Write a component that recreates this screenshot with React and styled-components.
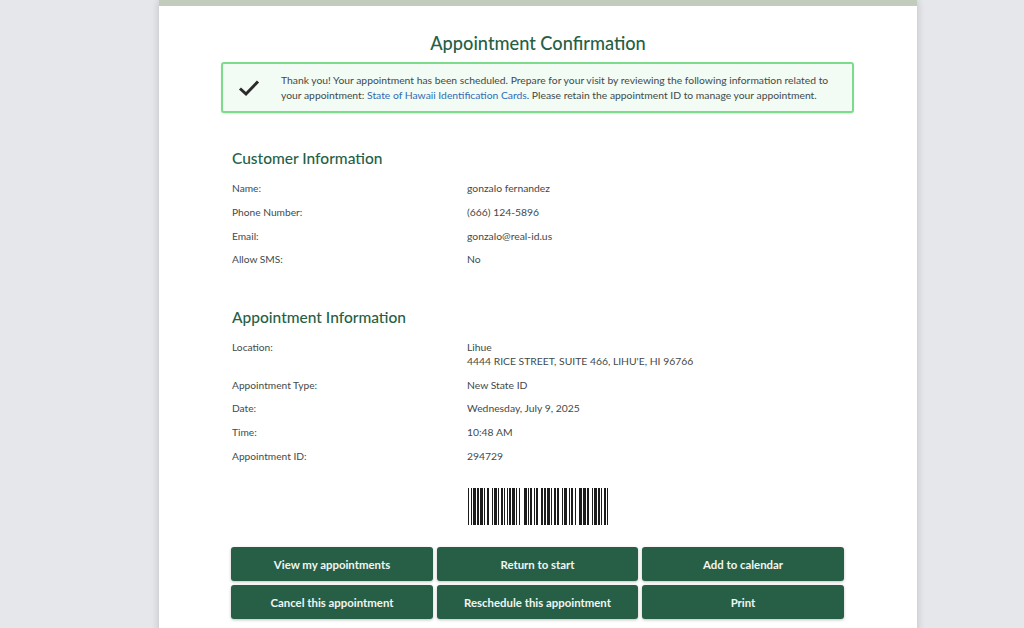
import styled, { createGlobalStyle } from "styled-components";

const Global = createGlobalStyle`
  html, body {
    margin: 0;
    height: 628px;
    overflow: hidden;
    background: #e5e7eb;
    font-family: Lato, "Noto Sans", sans-serif;
  }
`;

const customerRows = [
  ["Name:", "gonzalo fernandez"],
  ["Phone Number:", "(666) 124-5896"],
  ["Email:", "gonzalo@real-id.us"],
  ["Allow SMS:", "No"],
];

const appointmentRows = [
  ["Location:", "Lihue", "4444 RICE STREET, SUITE 466, LIHU'E, HI 96766"],
  ["Appointment Type:", "New State ID"],
  ["Date:", "Wednesday, July 9, 2025"],
  ["Time:", "10:48 AM"],
  ["Appointment ID:", "294729"],
];

const buttons = [
  "View my appointments",
  "Return to start",
  "Add to calendar",
  "Cancel this appointment",
  "Reschedule this appointment",
  "Print",
];

// bar, gap, bar, gap ... in px
const barcodeRuns = [
  1, 2, 1, 1, 3, 1, 2, 1, 3, 1, 1, 2, 2, 3,
  1, 1, 3, 1, 1, 2, 2, 1, 1, 2,
  1, 1, 2, 1, 3, 1, 1, 2, 1, 4,
  3, 1, 1, 1, 2, 2, 1, 1, 2, 3,
  2, 1, 2, 1, 3, 1, 1, 2, 2, 1, 2, 3,
  1, 1, 3, 2, 1, 1, 2, 2, 1, 3,
  3, 1, 3, 1, 2, 3,
  1, 1, 3, 1, 2, 1, 1, 2, 2, 1, 1,
];

function Barcode() {
  let x = 0;
  const bars = barcodeRuns.map((w, i) => {
    const rect = i % 2 === 0 ? <rect key={i} x={x} y="0" width={w} height="37" fill="#1c1c1c" /> : null;
    x += w;
    return rect;
  });
  return (
    <svg width="140" height="37" viewBox="0 0 140 37">
      {bars}
    </svg>
  );
}

function InfoRow({ label, lines }) {
  return (
    <Row>
      <Label>{label}</Label>
      <div>
        {lines.map((line) => (
          <div key={line}>{line}</div>
        ))}
      </div>
    </Row>
  );
}

export default function App() {
  return (
    <>
      <Global />
      <Page>
        <Card>
          <Title>Appointment Confirmation</Title>
          <Alert>
            <CheckWrap>
              <svg width="22" height="18" viewBox="0 0 22 18">
                <path d="M2 9.5 L8 15 L20 2.5" fill="none" stroke="#2b2b2b" strokeWidth="3" />
              </svg>
            </CheckWrap>
            <AlertText>
              Thank you! Your appointment has been scheduled. Prepare for your visit by reviewing the
              following information related to your appointment:{" "}
              <AlertLink>State of Hawaii Identification Cards</AlertLink>. Please retain the appointment
              ID to manage your appointment.
            </AlertText>
          </Alert>

          <Section>
            <Heading>Customer Information</Heading>
            {customerRows.map(([label, ...lines]) => (
              <InfoRow key={label} label={label} lines={lines} />
            ))}
          </Section>

          <Section $second>
            <Heading>Appointment Information</Heading>
            {appointmentRows.map(([label, ...lines]) => (
              <InfoRow key={label} label={label} lines={lines} />
            ))}
          </Section>

          <BarcodeWrap>
            <Barcode />
          </BarcodeWrap>

          <Buttons>
            {buttons.map((b) => (
              <ActionButton key={b}>{b}</ActionButton>
            ))}
          </Buttons>
        </Card>
      </Page>
    </>
  );
}

const Page = styled.div`
  display: flex;
  height: 628px;
  overflow: hidden;
`;

const Card = styled.main`
  margin-left: 159px;
  width: 758px;
  height: 700px;
  box-sizing: border-box;
  background: #fff;
  border-top: 6px solid #c1ccbc;
  box-shadow: 0 0 8px rgba(0, 0, 0, 0.18);
  padding: 0 62px;
  color: #3f4a4a;
`;

const Title = styled.h1`
  margin: 24px 0 0;
  height: 26px;
  line-height: 26px;
  text-align: center;
  font-size: 18.2px;
  font-weight: 500;
  color: #265f45;
`;

const Alert = styled.div`
  display: flex;
  align-items: center;
  width: 633px;
  height: 51px;
  box-sizing: border-box;
  margin-top: 6px;
  border: 2px solid #7ddc8c;
  border-radius: 3px;
  background: #f3fbf5;
  box-shadow: 0 1px 2px rgba(0, 0, 0, 0.1);
`;

const CheckWrap = styled.div`
  flex: 0 0 58px;
  display: flex;
  justify-content: center;
  padding-right: 7px;
  box-sizing: border-box;
`;

const AlertText = styled.div`
  font-size: 10.33px;
  line-height: 14.5px;
  color: #3f4a4a;
  padding-right: 20px;
`;

const AlertLink = styled.span`
  color: #2f6cb5;
`;

const Section = styled.section`
  margin-top: ${(p) => (p.$second ? "32.8px" : "33px")};
  padding-left: 11px;
`;

const Heading = styled.h2`
  margin: 0 0 7px;
  height: 24px;
  line-height: 24px;
  font-size: 15.5px;
  font-weight: 500;
  color: #265f45;
`;

const Row = styled.div`
  display: grid;
  grid-template-columns: 235px 1fr;
  padding: 5px 0;
  font-size: 10.35px;
  line-height: 13.8px;
`;

const Label = styled.div`
  font-size: 10.2px;
`;

const BarcodeWrap = styled.div`
  display: flex;
  margin-top: 19.4px;
  padding-left: 247px;
  height: 37px;
`;

const Buttons = styled.div`
  display: grid;
  grid-template-columns: 202px 201px 202px;
  grid-auto-rows: 34px;
  gap: 4px;
  margin: 22px 0 0 10px;
`;

const ActionButton = styled.button`
  border: none;
  border-radius: 3px;
  background: #265f45;
  color: #f1f5f2;
  font-family: inherit;
  font-size: 11.4px;
  font-weight: 700;
  box-shadow: 0 1px 3px rgba(0, 0, 0, 0.25);
`;
